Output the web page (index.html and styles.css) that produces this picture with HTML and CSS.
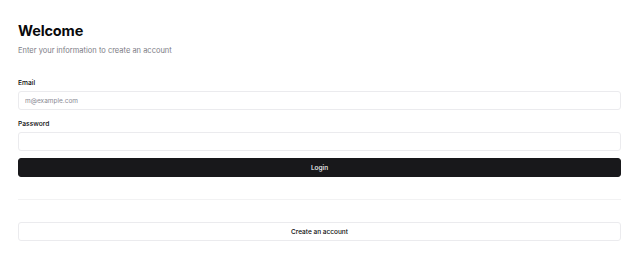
FILE: index.html
```html
<!DOCTYPE html>
<html>
<head>
<meta charset="utf-8">
<link rel="stylesheet" href="styles.css">
</head>
<body>
<div class="page">
  <div class="header">
    <h1 class="title">Welcome</h1>
    <p class="subtitle">Enter your information to create an account</p>
  </div>
  <form class="form">
    <div class="field">
      <label class="label">Email</label>
      <input class="input" type="email" placeholder="m@example.com">
    </div>
    <div class="field">
      <label class="label">Password</label>
      <input class="input" type="password">
    </div>
    <button class="btn btn-primary" type="button">Login</button>
  </form>
  <div class="divider"></div>
  <button class="btn btn-outline" type="button">Create an account</button>
</div>
</body>
</html>
```

FILE: styles.css
```css
* { box-sizing: border-box; }
html, body { margin: 0; padding: 0; background: #fff; }
body { font-family: Inter, "Noto Sans", sans-serif; color: #09090b; }
.page {
  display: flex;
  flex-direction: column;
  padding: 21px 19px 0 18px;
}
.header { display: flex; flex-direction: column; gap: 4px; }
.title {
  margin: 0;
  font-size: 14.5px;
  line-height: 20px;
  font-weight: 700;
  letter-spacing: -0.15px;
}
.subtitle {
  margin: 0;
  font-size: 7.5px;
  line-height: 11px;
  color: #7c7c85;
}
.form {
  display: flex;
  flex-direction: column;
  margin-top: 22px;
}
.field { display: flex; flex-direction: column; gap: 3px; margin-bottom: 9px; }
.field + .field { margin-bottom: 7px; }
.label {
  font-size: 6.7px;
  line-height: 10px;
  font-weight: 500;
}
.input {
  height: 19px;
  border: 1px solid #ebebee;
  border-radius: 3px;
  padding: 0 6px;
  font-family: inherit;
  font-size: 6.5px;
  color: #09090b;
  background: #fff;
  outline: none;
}
.input::placeholder { color: #8a8a93; }
.btn {
  height: 19px;
  border-radius: 3px;
  font-family: inherit;
  font-size: 6.5px;
  font-weight: 500;
  cursor: pointer;
  padding: 0;
}
.btn-primary {
  background: #18181b;
  color: #fafafa;
  border: 1px solid #18181b;
}
.divider {
  height: 1px;
  background: #f2f2f3;
  margin: 22px 0 22px;
}
.btn-outline {
  background: #fff;
  color: #09090b;
  border: 1px solid #ebebee;
}
```
